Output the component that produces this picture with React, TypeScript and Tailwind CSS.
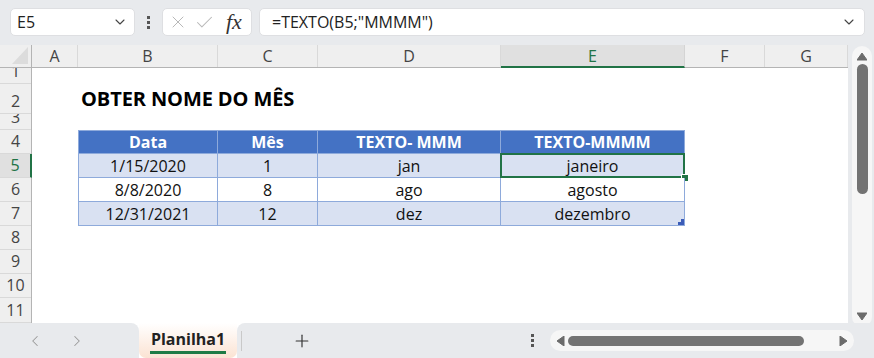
import React from 'react';
import { ChevronDown, X, Check, Plus, ChevronLeft, ChevronRight } from 'lucide-react';

const colWidths = [46, 140, 100, 183, 184, 80, 83];
const colNames = ['A', 'B', 'C', 'D', 'E', 'F', 'G'];
const rowHeights = [16, 30, 16, 24, 24, 24, 24, 24, 24, 24, 25];

const data = [
  { d: '1/15/2020', m: '1', a: 'jan', b: 'janeiro', band: true, sel: true },
  { d: '8/8/2020', m: '8', a: 'ago', b: 'agosto', band: false, sel: false },
  { d: '12/31/2021', m: '12', a: 'dez', b: 'dezembro', band: true, sel: false },
];

const Dots = () => (
  <div className="flex flex-col items-center gap-[2px]">
    <div className="w-[3px] h-[3px] bg-[#555]" />
    <div className="w-[3px] h-[3px] bg-[#555]" />
    <div className="w-[3px] h-[3px] bg-[#555]" />
  </div>
);

const Tri: React.FC<{ dir: 'up' | 'down' | 'left' | 'right' }> = ({ dir }) => {
  const pts = {
    up: '0,8 5,1 10,8',
    down: '0,1 10,1 5,8',
    left: '8,0 8,10 1,5',
    right: '1,0 1,10 8,5',
  }[dir];
  const w = dir === 'up' || dir === 'down' ? 10 : 9;
  const h = dir === 'up' || dir === 'down' ? 9 : 10;
  return (
    <svg width={w} height={h} viewBox={`0 0 ${w} ${h}`}>
      <polygon points={pts} fill="#6b6b6b" strokeLinejoin="round" stroke="#6b6b6b" strokeWidth={1} />
    </svg>
  );
};

export default function App() {
  return (
    <div className="w-[874px] h-[358px] overflow-hidden bg-[#e8eaed] font-['Open_Sans','Noto_Sans',sans-serif] text-[#222]">
      {/* Formula bar */}
      <div className="h-[45px] flex items-start pt-[8px] pl-[10px] pr-[9px]">
        <div className="w-[125px] h-[28px] bg-white rounded-[5px] border border-[#dedfe2] flex items-center justify-between pl-[6px] pr-[6px]">
          <span className="text-[16px]">E5</span>
          <ChevronDown size={16} strokeWidth={1.6} className="text-[#444]" />
        </div>
        <div className="w-[27px] h-[28px] flex items-center justify-center">
          <Dots />
        </div>
        <div className="w-[90px] h-[28px] bg-white rounded-[5px] border border-[#dedfe2] flex items-center pl-[5px]">
          <X size={20} strokeWidth={1.2} className="text-[#b8b8b8]" />
          <Check size={21} strokeWidth={1.2} className="text-[#b8b8b8] ml-[6px]" />
          <span className="ml-[11px] font-['Liberation_Serif',serif] italic text-[22px] leading-none text-[#333]">fx</span>
        </div>
        <div className="ml-[7px] flex-1 h-[28px] bg-white rounded-[5px] border border-[#dedfe2] flex items-center justify-between pl-[12px] pr-[7px]">
          <span className="text-[16px]">=TEXTO(B5;"MMMM")</span>
          <ChevronDown size={16} strokeWidth={1.6} className="text-[#444]" />
        </div>
      </div>

      {/* Sheet area */}
      <div className="h-[278px] flex">
        <div className="w-[848px] flex flex-col bg-white">
          {/* Column headers */}
          <div className="h-[23px] flex bg-[#efefef] border-b border-[#b4b4b4]">
            <div className="w-[32px] border-r border-[#b4b4b4] flex items-end justify-end pr-[3px] pb-[3px]">
              <svg width="16" height="17" viewBox="0 0 16 17">
                <polygon points="16,0 16,17 0,17" fill="#dcdcdc" />
              </svg>
            </div>
            {colNames.map((c, i) => (
              <div
                key={c}
                style={{ width: colWidths[i] }}
                className={
                  c === 'E'
                    ? 'flex items-center justify-center text-[16px] bg-[#e0e0e0] text-[#217346] border-r border-[#d4d4d4] border-b-2 border-b-[#217346] -mb-[1px]'
                    : 'flex items-center justify-center text-[16px] text-[#444] border-r border-[#d9d9d9]'
                }
              >
                {c}
              </div>
            ))}
          </div>

          <div className="flex flex-1">
            {/* Row headers */}
            <div className="w-[32px] bg-[#efefef] border-r border-[#b4b4b4] flex flex-col">
              {rowHeights.map((h, i) => (
                <div
                  key={i}
                  style={{ height: h }}
                  className={
                    i === 4
                      ? 'flex items-end justify-center overflow-hidden bg-[#e0e0e0] border-b border-[#d9d9d9] border-r-2 border-r-[#217346] -mr-[1px]'
                      : 'flex items-end justify-center overflow-hidden border-b border-[#d9d9d9]'
                  }
                >
                  <div className={i === 4 ? 'h-[24px] shrink-0 flex items-center text-[16px] text-[#217346]' : 'h-[24px] shrink-0 flex items-center text-[16px] text-[#444]'}>
                    {i + 1}
                  </div>
                </div>
              ))}
            </div>

            {/* Cells */}
            <div className="flex-1 flex flex-col">
              <div className="h-[16px]" />
              <div className="h-[30px] flex items-center pl-[49px]">
                <span className="text-[20px] font-bold text-black tracking-[-0.1px]">OBTER NOME DO MÊS</span>
              </div>
              <div className="h-[16px]" />
              <div className="ml-[46px] w-[607px] border-l border-t border-[#8eaadb] grid grid-cols-[139px_100px_183px_184px] grid-rows-[23px_24px_24px_24px] relative">
                {['Data', 'Mês', 'TEXTO- MMM', 'TEXTO-MMMM'].map((t) => (
                  <div key={t} className="bg-[#4472c4] text-white font-bold text-[16px] flex items-center justify-center border-r border-b border-[#8eaadb]">
                    {t}
                  </div>
                ))}
                {data.map((r) =>
                  [r.d, r.m, r.a, r.b].map((v, j) => (
                    <div
                      key={r.d + j}
                      className={
                        (r.band ? 'bg-[#d9e1f2] ' : 'bg-white ') +
                        'relative text-[16px] text-[#111] flex items-center justify-center border-r border-b border-[#8eaadb]'
                      }
                    >
                      {v}
                      {r.sel && j === 3 && (
                        <>
                          <div className="absolute -inset-[1px] border-2 border-[#217346]" />
                          <div className="absolute -bottom-[5px] -right-[5px] w-[8px] h-[8px] bg-[#217346] border border-white" />
                        </>
                      )}
                    </div>
                  ))
                )}
                <svg className="absolute right-[1px] bottom-[1px]" width="6" height="6" viewBox="0 0 6 6">
                  <polygon points="6,0 6,6 0,6 0,3 3,3 3,0" fill="#3b5cb8" />
                </svg>
              </div>
            </div>
          </div>
        </div>

        {/* Vertical scrollbar */}
        <div className="flex-1 pl-[4px] pr-[2px] pt-[1px]">
          <div className="w-[20px] h-[281px] bg-[#f6f6f6] rounded-full flex flex-col items-center pt-[6px]">
            <Tri dir="up" />
            <div className="mt-[3px] w-[11px] h-[130px] bg-[#737373] rounded-full" />
            <div className="flex-1" />
            <div className="mb-[6px]">
              <Tri dir="down" />
            </div>
          </div>
        </div>
      </div>

      {/* Sheet tabs bar */}
      <div className="h-[35px] flex bg-white">
        <div className="w-[139px] bg-[#e8eaed] rounded-tr-[8px] flex items-center pl-[26px] gap-[24px] text-[#9a9a9a]">
          <ChevronLeft size={18} strokeWidth={1.4} />
          <ChevronRight size={18} strokeWidth={1.4} />
        </div>
        <div className="w-[98px] bg-gradient-to-b from-white to-[#fbe3d3] rounded-b-[7px] flex flex-col items-center pt-[5px]">
          <span className="text-[16px] font-bold text-[#222] leading-[22px]">Planilha1</span>
          <div className="w-[76px] h-[3px] bg-[#1e7b45] mt-[1px]" />
        </div>
        <div className="flex-1 bg-[#e8eaed] rounded-tl-[8px] flex items-center">
          <div className="ml-[4px] w-[1px] h-[20px] bg-[#c9c9c9]" />
          <Plus size={20} strokeWidth={1.4} className="ml-[50px] text-[#333]" />
          <div className="ml-[219px]">
            <Dots />
          </div>
          <div className="ml-[16px] w-[304px] h-[21px] bg-[#f6f6f6] rounded-full flex items-center px-[6px]">
            <Tri dir="left" />
            <div className="ml-[3px] w-[236px] h-[10px] bg-[#737373] rounded-full" />
            <div className="flex-1" />
            <Tri dir="right" />
          </div>
        </div>
      </div>
    </div>
  );
}
